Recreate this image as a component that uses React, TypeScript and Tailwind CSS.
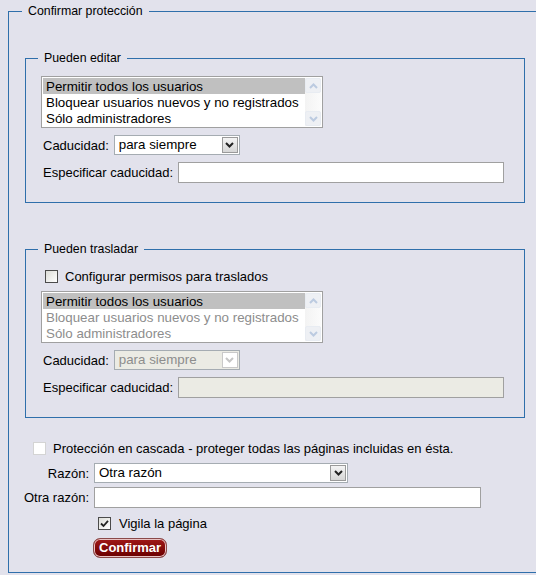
import type { ReactNode } from "react";

const OPTIONS = ["Permitir todos los usuarios", "Bloquear usuarios nuevos y no registrados", "Sólo administradores"];

function Chevron({ up, color }: { up?: boolean; color: string }) {
  return (
    <svg width="9" height="6" viewBox="0 0 9 6">
      <path d={up ? "M1 5 L4.5 1.5 L8 5" : "M1 1 L4.5 4.5 L8 1"} fill="none" stroke={color} strokeWidth="2" />
    </svg>
  );
}

function ListBox({ disabled }: { disabled?: boolean }) {
  return (
    <div className="flex h-[52px] w-[282px] border border-[#a0a0a0] bg-white p-px">
      <div className="flex-1 text-[13.33px] leading-[16px]">
        {OPTIONS.map((o, i) => (
          <div
            key={o}
            className={
              i === 0
                ? "h-[16px] bg-[#c0c0c0] pl-[3px] pt-px text-black"
                : disabled
                ? "h-[16px] pl-[3px] pt-px text-[#8d8d8d]"
                : "h-[16px] pl-[3px] pt-px text-black"
            }
          >
            {o}
          </div>
        ))}
      </div>
      <div className="flex w-[16px] flex-col justify-between bg-gradient-to-r from-[#f3f3f3] to-[#fbfbfb]">
        <div className="flex h-[15px] items-center justify-center rounded-[2px] border border-[#e8ecf2] bg-[#eef0f4]">
          <Chevron up color="#bccbe0" />
        </div>
        <div className="flex h-[15px] items-center justify-center rounded-[2px] border border-[#e8ecf2] bg-[#eef0f4]">
          <Chevron color="#bccbe0" />
        </div>
      </div>
    </div>
  );
}

function Select({ value, className, disabled }: { value: string; className: string; disabled?: boolean }) {
  return (
    <div
      className={`flex h-[20px] shrink-0 items-center border border-[#a5acb2] p-px text-[13.33px] ${
        disabled ? "bg-[#ebebe4] text-[#8d8d8d]" : "bg-white text-black"
      } ${className}`}
    >
      <span className="flex-1 pl-[3px] leading-[16px]">{value}</span>
      <span
        className={
          disabled
            ? "flex h-[16px] w-[16px] items-center justify-center border border-[#c9c9c9] bg-white"
            : "flex h-[16px] w-[16px] items-center justify-center border border-[#9a9a9a] bg-gradient-to-b from-[#f4f4f4] to-[#d6d6d6]"
        }
      >
        <Chevron color={disabled ? "#c6c6c6" : "#222"} />
      </span>
    </div>
  );
}

function TextInput({ className, disabled }: { className: string; disabled?: boolean }) {
  return (
    <div className={`h-[21px] shrink-0 border border-[#a0a0a0] ${disabled ? "bg-[#ebebe4]" : "bg-white"} ${className}`} />
  );
}

function Checkbox({ variant }: { variant: "empty" | "disabled" | "checked" }) {
  if (variant === "disabled") return <span className="block h-[13px] w-[13px] border border-[#d4d4d4] bg-white" />;
  return (
    <span className="flex h-[13px] w-[13px] items-center justify-center border border-[#4b4b4b] bg-gradient-to-br from-[#dcdcd7] to-white">
      {variant === "checked" && (
        <svg width="9" height="9" viewBox="0 0 9 9">
          <path d="M1 4.5 L3.5 7 L8 1.8" fill="none" stroke="#222" strokeWidth="1.8" />
        </svg>
      )}
    </span>
  );
}

function Legend({ children }: { children: ReactNode }) {
  return <legend className="ml-[-3px] px-[6px] text-[12.35px] leading-[15px]">{children}</legend>;
}

function Expiry({ disabled }: { disabled?: boolean }) {
  return (
    <>
      <div className="mt-[7px] flex items-center">
        <span className="ml-[2px] mr-[5px] whitespace-nowrap">Caducidad:</span>
        <Select value="para siempre" className="w-[126px]" disabled={disabled} />
      </div>
      <div className="mt-[7px] flex items-center">
        <span className="ml-[2px] mr-[5px] whitespace-nowrap">Especificar caducidad:</span>
        <TextInput className="w-[326px]" disabled={disabled} />
      </div>
    </>
  );
}

export default function App() {
  return (
    <div className="h-[575px] w-[536px] overflow-hidden bg-[#e2e2ec] font-['Liberation_Sans',Arial,sans-serif] text-[13px] leading-[15px] text-black">
      <fieldset className="ml-[8px] mt-[4px] w-[534px] border border-[#2f6fab] px-[16px] pb-[14px]">
        <Legend>Confirmar protección</Legend>

        {/* Pueden editar */}
        <fieldset className="mt-[32px] w-[500px] border border-[#2f6fab] px-[15px] pb-[19px]">
          <Legend>Pueden editar</Legend>
          <div className="mt-[10px]">
            <ListBox />
          </div>
          <Expiry />
        </fieldset>

        {/* Pueden trasladar */}
        <fieldset className="mt-[39px] w-[500px] border border-[#2f6fab] px-[15px] pb-[19px]">
          <Legend>Pueden trasladar</Legend>
          <div className="mt-[11px] flex h-[17px] items-center">
            <span className="ml-[4px] mr-[7px]">
              <Checkbox variant="empty" />
            </span>
            <span>Configurar permisos para traslados</span>
          </div>
          <div className="mt-[6px]">
            <ListBox disabled />
          </div>
          <Expiry disabled />
        </fieldset>

        <div className="mt-[22px] flex h-[17px] items-center">
          <span className="ml-[8px] mr-[7px]">
            <Checkbox variant="disabled" />
          </span>
          <span className="whitespace-nowrap">Protección en cascada - proteger todas las páginas incluidas en ésta.</span>
        </div>

        <div className="mt-[6px] flex items-center">
          <span className="mr-[5px] flex w-[64px] shrink-0 justify-end whitespace-nowrap">Razón:</span>
          <Select value="Otra razón" className="w-[254px]" />
        </div>
        <div className="mt-[4px] flex items-center">
          <span className="mr-[5px] flex w-[64px] shrink-0 justify-end whitespace-nowrap">Otra razón:</span>
          <TextInput className="w-[387px]" />
        </div>
        <div className="mt-[7px] flex h-[17px] items-center pl-[73px]">
          <span className="mr-[8px]">
            <Checkbox variant="checked" />
          </span>
          <span>Vigila la página</span>
        </div>
        <div className="mt-[6px] pl-[68px]">
          <button className="h-[20px] rounded-[7px] border border-[#8a4a4a] bg-gradient-to-b from-[#a01818] to-[#6a0000] px-[5px] text-[13px] font-bold leading-[16px] text-white shadow-[inset_0_0_0_1px_#e9c4c4]">
            Confirmar
          </button>
        </div>
      </fieldset>
    </div>
  );
}
